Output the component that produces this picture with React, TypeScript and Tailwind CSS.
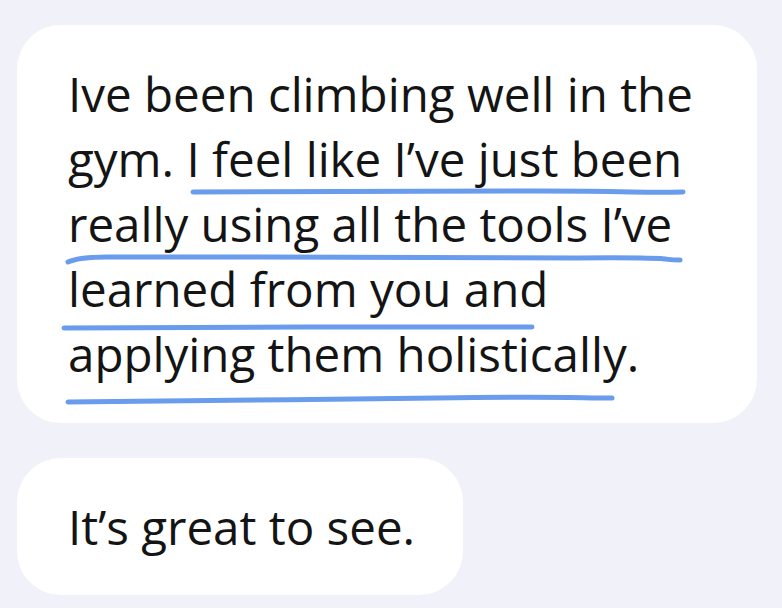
const font = { fontFamily: '"Open Sans", "Noto Sans", sans-serif' };

const Underlines = () => (
  <svg
    className="absolute inset-0 pointer-events-none"
    width="740"
    height="398"
    viewBox="0 0 740 398"
    fill="none"
  >
    <g stroke="#6a9cee" strokeWidth="5" strokeLinecap="round">
      <path d="M176 167 C 300 166, 420 166, 520 166 S 620 168, 666 167" />
      <path d="M51 237 C 60 233, 72 232, 90 232 C 250 231, 450 234, 560 233 S 640 235, 663 235" />
      <path d="M47 303 C 180 302, 380 302, 515 302" />
      <path d="M51 377 C 160 375, 300 375, 420 373 S 560 373, 595 373" />
    </g>
  </svg>
);

export default function App() {
  return (
    <div className="w-[782px] h-[608px] bg-[#f1f2f9] pt-[25px] pl-[17px] overflow-hidden" style={font}>
      <div className="relative w-[740px] h-[398px] bg-white rounded-[44px] pl-[51px] pt-[36px]">
        <p className="text-[47.5px] leading-[65px] text-[#141414]">
          Ive been climbing well in the
          <br />
          gym. I feel like I’ve just been
          <br />
          really using all the tools I’ve
          <br />
          learned from you and
          <br />
          applying them holistically.
        </p>
        <Underlines />
      </div>
      <div className="mt-[35px] w-[446px] h-[137px] bg-white rounded-[44px] pl-[51px] pt-[36px]">
        <p className="text-[47.5px] leading-[65px] text-[#141414]">It’s great to see.</p>
      </div>
    </div>
  );
}
